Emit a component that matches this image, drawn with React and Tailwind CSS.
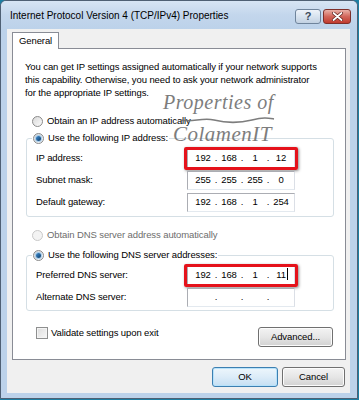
import { Fragment } from "react";

const sans = "font-['Liberation_Sans',Arial,sans-serif]";

function Radio({ checked, disabled }) {
  return (
    <span
      className={`flex h-[11px] w-[11px] shrink-0 items-center justify-center rounded-full border ${
        disabled
          ? "border-[#c9c9c9] bg-[#f3f3f3]"
          : "border-[#8a8a8a] bg-gradient-to-br from-[#d9d9d9] to-[#fbfbfb]"
      }`}
    >
      {checked && (
        <span className="h-[5px] w-[5px] rounded-full bg-gradient-to-br from-[#3d8fd6] to-[#0d3b66] shadow-[0_0_1px_1px_#9cc7ea]" />
      )}
    </span>
  );
}

function RadioRow({ label, checked, disabled }) {
  return (
    <div className={`flex h-[16px] items-center gap-[4px] whitespace-nowrap ${disabled ? "text-[#6d6d6d]" : "text-black"}`}>
      <Radio checked={checked} disabled={disabled} />
      <span>{label}</span>
    </div>
  );
}

function IpField({ parts, highlight, caret }) {
  return (
    <div className="relative flex h-[19px] w-[108px] items-center border border-[#abadb3] border-b-[#e3e9ef] border-r-[#dbdfe6] bg-white pl-[4px]">
      {parts.map((p, i) => (
        <Fragment key={i}>
          <span className="w-[22px] text-center">
            {caret && i === 3 ? (
              <span className="relative">
                {p}
                <span className="absolute left-full top-[-1px] ml-[1px] h-[12px] w-px bg-black" />
              </span>
            ) : (
              p
            )}
          </span>
          {i < 3 && <span className="w-[4px] text-center">.</span>}
        </Fragment>
      ))}
      {highlight && (
        <span className="absolute -bottom-[3px] -left-[4px] -right-[4px] -top-[3px] rounded-[2px] border-[3px] border-[#e5121b] shadow-[1px_1px_3px_rgba(0,0,0,0.45)]" />
      )}
    </div>
  );
}

function FieldRow({ label, children }) {
  return (
    <div className="flex items-center">
      <span className="w-[151px]">{label}</span>
      {children}
    </div>
  );
}

function Button({ children, primary, className = "" }) {
  return (
    <div
      className={`flex h-[20px] items-center justify-center rounded-[3px] border bg-gradient-to-b ${
        primary
          ? "border-[#3c7fb1] from-[#edf6fc] via-[#dcecf8] to-[#c4dff3] shadow-[inset_0_0_0_1px_#b6e2fb]"
          : "border-[#707070] from-[#f3f3f3] via-[#e6e6e6] to-[#d2d2d2] shadow-[inset_0_0_0_1px_#fcfcfc]"
      } ${className}`}
    >
      {children}
    </div>
  );
}

export default function App() {
  return (
    <div className={`h-[400px] w-[359px] overflow-hidden bg-[#1d7fa3] text-[9.5px] tracking-[-0.1px] text-black ${sans}`}>
      <div className="flex h-[399px] w-[358px] flex-col rounded-t-[6px] border border-[#4f6074] bg-[#bcd2ea]">
        {/* title bar */}
        <div className="flex h-[28px] shrink-0 items-center rounded-t-[5px] bg-gradient-to-b from-[#d7e5f4] via-[#c3d6ec] to-[#bcd2ea] pl-[9px] pr-[6px]">
          <span className="flex-1 whitespace-nowrap text-[10px] tracking-normal text-black">
            Internet Protocol Version 4 (TCP/IPv4) Properties
          </span>
          <div className="mt-[2px] flex gap-[2px]">
            <div className="flex h-[15px] w-[26px] items-center justify-center rounded-[3px] border border-[#6f849c] bg-gradient-to-b from-[#eef3f9] via-[#d8e3ef] to-[#c2d1e2] text-[11px] font-bold leading-none text-[#3a4a5c]">
              ?
            </div>
            <div className="flex h-[15px] w-[28px] items-center justify-center rounded-[3px] border border-[#7e2f2a] bg-gradient-to-b from-[#e8b0a8] via-[#d2665b] to-[#c0392e]">
              <svg width="11" height="9" viewBox="0 0 11 9">
                <path d="M1.5 1 L9.5 8 M9.5 1 L1.5 8" stroke="#5a1c18" strokeWidth="3.2" strokeLinecap="round" />
                <path d="M1.5 1 L9.5 8 M9.5 1 L1.5 8" stroke="#ffffff" strokeWidth="1.8" strokeLinecap="round" />
              </svg>
            </div>
          </div>
        </div>

        {/* client area */}
        <div className="mb-[5px] ml-[6px] mr-[7px] flex flex-1 flex-col bg-[#f0f0f0] pl-[5px] pr-[4px] pt-[3px]">
          {/* tab strip */}
          <div className="relative z-10 -mb-px flex">
            <div className="flex h-[17px] w-[47px] items-center border border-b-0 border-[#898c95] bg-white pl-[6px]">
              General
            </div>
          </div>

          {/* tab panel */}
          <div className="relative flex h-[312px] flex-col border border-[#898c95] bg-white pt-[11px]">
            <p className="whitespace-nowrap pl-[12px] leading-[13px]">
              You can get IP settings assigned automatically if your network supports
              <br />
              this capability. Otherwise, you need to ask your network administrator
              <br />
              for the appropriate IP settings.
            </p>

            <div className="ml-[19px] mt-[14px]">
              <RadioRow label="Obtain an IP address automatically" />
            </div>

            <fieldset className="ml-[13px] mr-[11px] mt-px rounded-[3px] border border-[#d5dfe5] pb-[4px] pl-[9px] pt-[3px]">
              <legend className="-ml-[4px] px-px">
                <RadioRow label="Use the following IP address:" checked />
              </legend>
              <div className="flex flex-col gap-[3px]">
                <FieldRow label="IP address:">
                  <IpField parts={["192", "168", "1", "12"]} highlight />
                </FieldRow>
                <FieldRow label="Subnet mask:">
                  <IpField parts={["255", "255", "255", "0"]} />
                </FieldRow>
                <FieldRow label="Default gateway:">
                  <IpField parts={["192", "168", "1", "254"]} />
                </FieldRow>
              </div>
            </fieldset>

            <div className="ml-[19px] mt-[10px]">
              <RadioRow label="Obtain DNS server address automatically" disabled />
            </div>

            <fieldset className="ml-[13px] mr-[11px] mt-[4px] rounded-[3px] border border-[#d5dfe5] pb-[3px] pl-[9px] pt-[3px]">
              <legend className="-ml-[4px] px-px">
                <RadioRow label="Use the following DNS server addresses:" checked />
              </legend>
              <div className="flex flex-col gap-[3px]">
                <FieldRow label="Preferred DNS server:">
                  <IpField parts={["192", "168", "1", "11"]} highlight caret />
                </FieldRow>
                <FieldRow label="Alternate DNS server:">
                  <IpField parts={["", "", "", ""]} />
                </FieldRow>
              </div>
            </fieldset>

            <div className="ml-[23px] mr-[12px] mt-[15px] flex items-start justify-between">
              <div className="flex items-center gap-[3px]">
                <span className="h-[12px] w-[12px] border border-[#8e8f8f] bg-gradient-to-br from-[#dcdcdc] to-[#f8f8f8] shadow-[inset_0_0_0_1px_#f4f4f4]" />
                <span>Validate settings upon exit</span>
              </div>
              <Button className="mt-px h-[19px] w-[75px]">Advanced...</Button>
            </div>

            {/* watermark */}
            <div className="pointer-events-none absolute left-[150px] top-[41px] font-['Liberation_Serif',serif] italic tracking-[0.5px] text-[#707070] opacity-90">
              <div className="text-[20px] leading-[24px]">Properties of</div>
              <svg className="ml-[17px] mt-px block" width="96" height="10" viewBox="0 0 96 10">
                <path d="M1 5 C 12 8, 22 2, 34 5 S 60 8, 72 5 S 88 3, 94 4" fill="none" stroke="#707070" strokeWidth="1.6" />
              </svg>
              <div className="-mt-[3px] ml-[10px] text-[21px] leading-[24px]">ColamenIT</div>
            </div>
          </div>

          {/* dialog buttons */}
          <div className="mt-[7px] flex justify-end gap-[4px] pr-px">
            <Button primary className="w-[66px]">OK</Button>
            <Button className="w-[63px]">Cancel</Button>
          </div>
        </div>
      </div>
    </div>
  );
}
